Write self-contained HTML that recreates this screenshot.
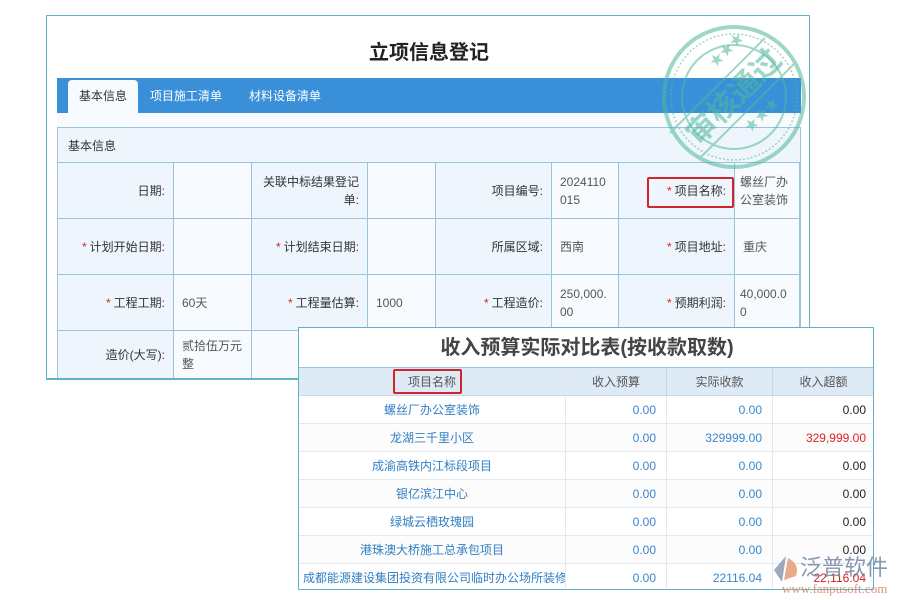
<!DOCTYPE html>
<html><head><meta charset="utf-8"><style>
*{margin:0;padding:0;box-sizing:border-box}
body{width:900px;height:600px;background:#fff;position:relative;overflow:hidden;font-family:"Liberation Sans","Noto Sans CJK SC",sans-serif;font-size:12px;color:#333}
.a{position:absolute}
#main{left:46px;top:15px;width:764px;height:364px;border:1.5px solid #5fb3c4;border-bottom:none;background:#fff;overflow:hidden}
.c{position:absolute;border-right:1px solid #9cc3dc;border-bottom:1px solid #9cc3dc;display:flex;align-items:center;line-height:18px}
.l{background:#eef5fc;justify-content:flex-end;padding-right:8px;text-align:right}
.v{background:#f7fbff;padding-left:8px;color:#555}
.s{color:#d22;margin-right:3px}
#t2{left:298px;top:327px;width:576px;height:263px;border:1.5px solid #5fb3c4;background:#fff;overflow:hidden}
.r{position:absolute;left:0;width:575px;height:28px;border-bottom:1px solid #e3e8ee}
.r div{position:absolute;top:0;height:28px;line-height:28px;border-right:1px solid #e3e8ee;font-size:12px}
.n{left:0;width:267px;text-align:center;color:#2f7fc4;white-space:nowrap;overflow:hidden}
.b{left:267px;width:101px;text-align:right;padding-right:10px;color:#3a86c8}
.k{left:368px;width:106px;text-align:right;padding-right:10px;color:#3a86c8}
.x{left:474px;width:101px;text-align:right;padding-right:8px;color:#222;border-right:none!important}
</style></head><body>
<div id="main" class="a">
 <div class="a" style="left:0;top:20px;width:764px;text-align:center;font-size:20px;font-weight:bold;color:#222">立项信息登记</div>
 <div class="a" style="left:10px;top:62px;width:744px;height:35px;background:#3a90d8"></div>
 <div class="a" style="left:21px;top:64px;width:70px;height:33px;background:#f7fbff;border-radius:4px 4px 0 0;text-align:center;line-height:32px;color:#333">基本信息</div>
 <div class="a" style="left:103px;top:64px;line-height:32px;color:#fff">项目施工清单</div>
 <div class="a" style="left:202px;top:64px;line-height:32px;color:#fff">材料设备清单</div>
 <div class="a" style="left:10px;top:97px;width:744px;height:14px;background:#f7fbff"></div>
 <div class="a" style="left:10px;top:111px;width:744px;height:270px;border:1px solid #9cc3dc;background:#eef5fc"></div>
 <div class="a" style="left:21px;top:121px;color:#333">基本信息</div>
 <div class="a" style="left:10px;top:146px;width:744px;height:1px;background:#9cc3dc"></div>
</div>
<div class="a" style="left:0;top:0">
 <div class="c l" style="left:58px;top:163px;width:116px;height:56px">日期:</div>
 <div class="c v" style="left:174px;top:163px;width:78px;height:56px"></div>
 <div class="c l" style="left:252px;top:163px;width:116px;height:56px">关联中标结果登记<br>单:</div>
 <div class="c v" style="left:368px;top:163px;width:68px;height:56px"></div>
 <div class="c l" style="left:436px;top:163px;width:116px;height:56px">项目编号:</div>
 <div class="c v" style="left:552px;top:163px;width:67px;height:56px">2024110<br>015</div>
 <div class="c l" style="left:619px;top:163px;width:116px;height:56px"><span class="s">*</span>项目名称:</div>
 <div class="c v" style="left:735px;top:163px;width:65px;height:56px;padding-left:5px">螺丝厂办<br>公室装饰</div>
 <div class="c l" style="left:58px;top:219px;width:116px;height:56px"><span class="s">*</span>计划开始日期:</div>
 <div class="c v" style="left:174px;top:219px;width:78px;height:56px"></div>
 <div class="c l" style="left:252px;top:219px;width:116px;height:56px"><span class="s">*</span>计划结束日期:</div>
 <div class="c v" style="left:368px;top:219px;width:68px;height:56px"></div>
 <div class="c l" style="left:436px;top:219px;width:116px;height:56px">所属区域:</div>
 <div class="c v" style="left:552px;top:219px;width:67px;height:56px">西南</div>
 <div class="c l" style="left:619px;top:219px;width:116px;height:56px"><span class="s">*</span>项目地址:</div>
 <div class="c v" style="left:735px;top:219px;width:65px;height:56px">重庆</div>
 <div class="c l" style="left:58px;top:275px;width:116px;height:56px"><span class="s">*</span>工程工期:</div>
 <div class="c v" style="left:174px;top:275px;width:78px;height:56px">60天</div>
 <div class="c l" style="left:252px;top:275px;width:116px;height:56px"><span class="s">*</span>工程量估算:</div>
 <div class="c v" style="left:368px;top:275px;width:68px;height:56px">1000</div>
 <div class="c l" style="left:436px;top:275px;width:116px;height:56px"><span class="s">*</span>工程造价:</div>
 <div class="c v" style="left:552px;top:275px;width:67px;height:56px">250,000.<br>00</div>
 <div class="c l" style="left:619px;top:275px;width:116px;height:56px"><span class="s">*</span>预期利润:</div>
 <div class="c v" style="left:735px;top:275px;width:65px;height:56px;padding-left:5px">40,000.0<br>0</div>
 <div class="c l" style="left:58px;top:331px;width:116px;height:48px;border-bottom:none">造价(大写):</div>
 <div class="c v" style="left:174px;top:331px;width:78px;height:48px;border-bottom:none">贰拾伍万元<br>整</div>
 <div class="c v" style="left:252px;top:331px;width:116px;height:48px;border-bottom:none"></div>
 <div class="a" style="left:46px;top:378px;width:254px;height:2px;background:#5fb3c4"></div>
</div>
<div class="a" style="left:647px;top:177px;width:87px;height:31px;border:2px solid #d0252a;border-radius:2px"></div>
<svg class="a" style="left:660px;top:23px" width="148" height="148" viewBox="0 0 148 148">
 <g fill="none" stroke="#4fb89c" opacity="0.55">
  <circle cx="74" cy="74" r="70" stroke-width="4"/>
  <circle cx="74" cy="74" r="63" stroke-width="1.5" stroke-dasharray="2 2"/>
  <circle cx="74" cy="74" r="52" stroke-width="2"/>
  <line x1="10" y1="110" x2="105" y2="15" stroke-width="2"/>
  <line x1="40" y1="135" x2="135" y2="40" stroke-width="2"/>
 </g>
 <text x="74" y="84" transform="rotate(-45 74 74)" text-anchor="middle" font-family="Noto Sans CJK SC,sans-serif" font-weight="bold" font-size="30" fill="#4fb89c" opacity="0.55">审核通过</text>
 <text x="55" y="45" font-size="14" fill="#4fb89c" opacity="0.55" transform="rotate(-45 55 45)">★★★</text>
 <text x="90" y="110" font-size="14" fill="#4fb89c" opacity="0.55" transform="rotate(-45 90 110)">★★★</text>
</svg>
<div id="t2" class="a">
 <div class="a" style="left:0;top:3px;width:576px;text-align:center;font-size:20px;font-weight:bold;color:#444">收入预算实际对比表(按收款取数)</div>
 <div class="a" style="left:0;top:39px;width:576px;height:29px;background:#dfeaf7;border-top:1px solid #9cc3dc;border-bottom:1px solid #c8d8e8"></div>
 <div class="r" style="top:40px;border:none"><div class="n" style="color:#555">项目名称</div><div class="b" style="text-align:center;padding:0;color:#555;border-color:#c8d8e8">收入预算</div><div class="k" style="text-align:center;padding:0;color:#555;border-color:#c8d8e8">实际收款</div><div class="x" style="text-align:center;padding:0;color:#555">收入超额</div></div>
 <div class="r" style="top:68px"><div class="n">螺丝厂办公室装饰</div><div class="b">0.00</div><div class="k">0.00</div><div class="x">0.00</div></div>
 <div class="r" style="top:96px;background:#fcfcfc"><div class="n">龙湖三千里小区</div><div class="b">0.00</div><div class="k">329999.00</div><div class="x" style="color:#d22">329,999.00</div></div>
 <div class="r" style="top:124px"><div class="n">成渝高铁内江标段项目</div><div class="b">0.00</div><div class="k">0.00</div><div class="x">0.00</div></div>
 <div class="r" style="top:152px;background:#fcfcfc"><div class="n">银亿滨江中心</div><div class="b">0.00</div><div class="k">0.00</div><div class="x">0.00</div></div>
 <div class="r" style="top:180px"><div class="n">绿城云栖玫瑰园</div><div class="b">0.00</div><div class="k">0.00</div><div class="x">0.00</div></div>
 <div class="r" style="top:208px;background:#fcfcfc"><div class="n">港珠澳大桥施工总承包项目</div><div class="b">0.00</div><div class="k">0.00</div><div class="x">0.00</div></div>
 <div class="r" style="top:236px;border:none"><div class="n" style="text-align:left;padding-left:4px">成都能源建设集团投资有限公司临时办公场所装修</div><div class="b">0.00</div><div class="k">22116.04</div><div class="x" style="color:#c22">22,116.04</div></div>
</div>
<div class="a" style="left:393px;top:369px;width:69px;height:25px;border:2px solid #d0252a;border-radius:2px"></div>
<svg class="a" style="left:772px;top:554px" width="30" height="30" viewBox="0 0 30 30">
 <path d="M14 2 L2 16 L10 28 Z" fill="#8a9bb0" opacity="0.85"/>
 <path d="M16 4 Q28 10 24 22 L12 26 Z" fill="#e89a78" opacity="0.85"/>
</svg>
<div class="a" style="left:800px;top:553px;font-size:22px;line-height:26px;white-space:nowrap;color:#7b8ea6;font-family:'Noto Sans CJK SC',sans-serif;letter-spacing:0;opacity:0.9">泛普软件</div>
<div class="a" style="left:782px;top:581px;font-size:13px;white-space:nowrap;color:#d88a70;font-family:'Liberation Serif',serif;opacity:0.9">www.fanpusoft.com</div>
</body></html>
